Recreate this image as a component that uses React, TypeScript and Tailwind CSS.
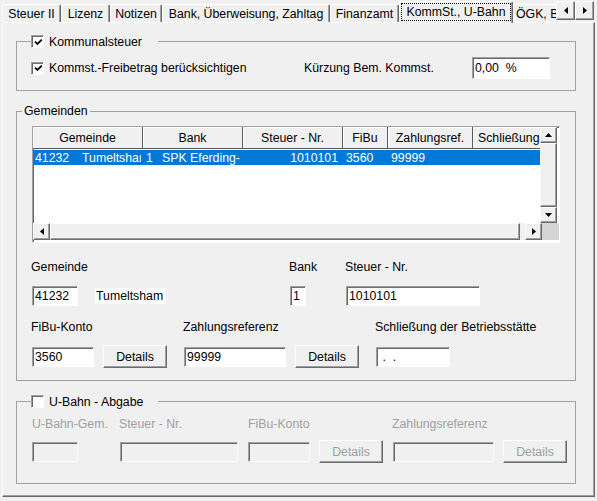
import React from "react";

const sunken =
  "border border-t-[#a0a0a0] border-l-[#a0a0a0] border-b-white border-r-white shadow-[inset_1px_1px_0_#696969]";
const raised =
  "border border-t-white border-l-white border-b-[#696969] border-r-[#696969] shadow-[inset_-1px_-1px_0_#a0a0a0]";

function Field({
  w,
  h = "h-[20px]",
  value = "",
  disabled = false,
  className = "",
}: {
  w: string;
  h?: string;
  value?: string;
  disabled?: boolean;
  className?: string;
}) {
  return (
    <div
      className={`${sunken} ${w} ${h} ${
        disabled ? "bg-[#f0f0f0]" : "bg-white"
      } shrink-0 flex items-center whitespace-pre overflow-hidden pl-[2px] ${className}`}
    >
      {value}
    </div>
  );
}

function Btn({ disabled = false, className = "" }: { disabled?: boolean; className?: string }) {
  return (
    <div
      className={`${raised} w-[64px] h-[23px] shrink-0 flex items-center justify-center ${
        disabled ? "text-[#a0a0a0]" : ""
      } ${className}`}
    >
      Details
    </div>
  );
}

function Check({ checked }: { checked?: boolean }) {
  return (
    <div className={`${sunken} w-[13px] h-[13px] bg-white shrink-0 flex items-center justify-center`}>
      {checked && (
        <svg width="9" height="9" viewBox="0 0 9 9" className="ml-[1px] mt-[1px]">
          <path d="M1 3.6 L3.4 6 L7.8 1.6" stroke="#000" strokeWidth="1.8" fill="none" />
        </svg>
      )}
    </div>
  );
}

function Arrow({ dir }: { dir: "up" | "down" | "left" | "right" }) {
  const pts = {
    up: "3.5,0 7,4 0,4",
    down: "0,0 7,0 3.5,4",
    left: "4,0 4,7 0,3.5",
    right: "0,0 0,7 4,3.5",
  }[dir];
  const vertical = dir === "up" || dir === "down";
  return (
    <svg width={vertical ? 7 : 4} height={vertical ? 4 : 7} viewBox={vertical ? "0 0 7 4" : "0 0 4 7"}>
      <polygon points={pts} fill="#000" />
    </svg>
  );
}

const tabs = [
  { label: "Steuer II", w: "w-[59px]" },
  { label: "Lizenz", w: "w-[49px]" },
  { label: "Notizen", w: "w-[52px]" },
  { label: "Bank, Überweisung, Zahltag", w: "w-[168px]" },
  { label: "Finanzamt", w: "w-[69px]" },
];

const cols = [
  { label: "Gemeinde", w: "w-[110px]" },
  { label: "Bank", w: "w-[100px]" },
  { label: "Steuer - Nr.", w: "w-[100px]" },
  { label: "FiBu", w: "w-[45px]" },
  { label: "Zahlungsref.", w: "w-[85px]" },
];

function ListView() {
  return (
    <div className={`${sunken} ml-[15px] mt-[8px] w-[528px] h-[117px] bg-white flex flex-col`}>
      <div className="flex h-[96px]">
        <div className="w-[507px] overflow-hidden">
          <div className="flex h-[22px] w-[600px]">
            {cols.map((c) => (
              <div
                key={c.label}
                className={`${c.w} shrink-0 bg-[#f0f0f0] border-r border-b border-[#5a5a5a] shadow-[inset_1px_1px_0_#fff] flex items-center justify-center whitespace-nowrap`}
              >
                {c.label}
              </div>
            ))}
            <div className="w-[100px] shrink-0 bg-[#f0f0f0] border-r border-b border-[#5a5a5a] shadow-[inset_1px_1px_0_#fff] flex items-center pl-[5px] whitespace-nowrap">
              Schließung der Betriebsstätte
            </div>
          </div>
          <div className="flex mt-[1px] h-[15px] w-[600px] bg-[#0078d7] text-white items-center whitespace-nowrap">
            <div className="w-[110px] shrink-0 pl-[2px] pr-[2px]">
              <div className="flex overflow-hidden">
                <span className="w-[47px] shrink-0">41232</span>
                <span>Tumeltsham</span>
              </div>
            </div>
            <div className="w-[100px] shrink-0 pl-[3px] overflow-hidden flex">
              <span className="w-[16px] shrink-0">1</span>
              <span>SPK Eferding-</span>
            </div>
            <div className="w-[100px] shrink-0 pr-[5px] text-right">1010101</div>
            <div className="w-[45px] shrink-0 pl-[3px]">3560</div>
            <div className="w-[85px] shrink-0 pl-[3px]">99999</div>
          </div>
        </div>
        <div className="w-[17px] flex flex-col bg-[#f0f0f0]">
          <div className={`${raised} h-[16px] flex items-center justify-center`}>
            <Arrow dir="up" />
          </div>
          <div className={`${raised} flex-1`} />
          <div className={`${raised} h-[16px] flex items-center justify-center`}>
            <Arrow dir="down" />
          </div>
        </div>
      </div>
      <div className="flex h-[17px] bg-[#f0f0f0]">
        <div className={`${raised} w-[17px] flex items-center justify-center`}>
          <Arrow dir="left" />
        </div>
        <div className={`${raised} w-[470px]`} />
        <div className="flex-1" />
        <div className={`${raised} w-[17px] flex items-center justify-center`}>
          <Arrow dir="right" />
        </div>
        <div className="w-[17px] bg-[#d4d4d4]" />
      </div>
    </div>
  );
}

export default function App() {
  return (
    <div className="w-[597px] h-[501px] bg-[#f0f0f0] text-[12.3px] leading-[14px] text-black font-['Liberation_Sans',Arial,sans-serif] overflow-hidden">
      {/* tab strip */}
      <div className="flex items-end h-[22px] pl-[2px]">
        {tabs.map((t) => (
          <div
            key={t.label}
            className={`${t.w} h-[18px] shrink-0 border border-b-0 border-t-white border-l-white border-r-[#696969] shadow-[inset_-1px_0_0_#a0a0a0] rounded-t-[2px] flex items-center justify-center whitespace-nowrap overflow-hidden`}
          >
            {t.label}
          </div>
        ))}
        <div className="relative z-10 w-[114px] h-[22px] -mb-[1px] shrink-0 bg-[#f0f0f0] border border-b-0 border-t-white border-l-white border-r-[#696969] shadow-[inset_-1px_0_0_#a0a0a0] rounded-t-[2px] flex flex-col items-center pt-[1px]">
          <div className="h-[18px] border border-dotted border-black px-[4px] leading-[16px] whitespace-nowrap">
            KommSt., U-Bahn
          </div>
        </div>
        <div className="w-[43px] h-[18px] shrink-0 border border-b-0 border-r-0 border-t-white border-l-white rounded-tl-[2px] pl-[2px] flex items-center whitespace-nowrap overflow-hidden">
          ÖGK, Beitragskonto
        </div>
        <div className="self-start mt-[1px] flex">
          <div className={`${raised} w-[19px] h-[19px] bg-[#f0f0f0] flex items-center justify-center`}>
            <Arrow dir="left" />
          </div>
          <div className={`${raised} w-[19px] h-[19px] bg-[#f0f0f0] flex items-center justify-center`}>
            <Arrow dir="right" />
          </div>
        </div>
      </div>

      {/* page */}
      <div className="ml-[2px] w-[593px] h-[475px] border border-t-white border-l-white border-r-[#696969] border-b-[#696969] shadow-[inset_-1px_-1px_0_#a0a0a0] flex flex-col">
        {/* Kommunalsteuer */}
        <fieldset className="mt-[12px] ml-[13px] w-[560px] border border-[#a0a0a0] pb-[11px]">
          <legend className="ml-[14px] w-[127px]">
            <div className="h-[13px] flex items-center gap-[5px]">
              <Check checked />
              <span>Kommunalsteuer</span>
            </div>
          </legend>
          <div className="mt-[9px] h-[22px] pl-[14px] flex items-center">
            <div className="w-[273px] flex items-center gap-[5px]">
              <Check checked />
              <span>Kommst.-Freibetrag berücksichtigen</span>
            </div>
            <span className="w-[168px]">Kürzung Bem. Kommst.</span>
            <Field w="w-[78px]" h="h-[22px]" value="0,00  %" />
          </div>
        </fieldset>

        {/* Gemeinden */}
        <fieldset className="mt-[13px] ml-[13px] w-[560px] border border-[#a0a0a0] pb-[12px]">
          <legend className="ml-[5px] px-[2px] h-[14px] leading-[14px]">Gemeinden</legend>
          <ListView />
          <div className="mt-[17px] h-[14px] pl-[14px] flex">
            <span className="w-[258px]">Gemeinde</span>
            <span className="w-[56px]">Bank</span>
            <span>Steuer - Nr.</span>
          </div>
          <div className="mt-[12px] h-[20px] pl-[14px] flex items-center">
            <Field w="w-[46px]" value="41232" className="ml-[1px]" />
            <div className="ml-[17px] w-[71px] h-[16px] bg-white pl-[1px] flex items-center">Tumeltsham</div>
            <Field w="w-[16px]" value="1" className="ml-[124px]" />
            <Field w="w-[134px]" value="1010101" className="ml-[40px]" />
          </div>
          <div className="mt-[14px] h-[14px] pl-[14px] flex">
            <span className="w-[152px]">FiBu-Konto</span>
            <span className="w-[192px]">Zahlungsreferenz</span>
            <span>Schließung der Betriebsstätte</span>
          </div>
          <div className="mt-[11px] h-[23px] pl-[14px] flex items-center">
            <Field w="w-[62px]" value="3560" className="ml-[1px]" />
            <Btn className="ml-[9px]" />
            <Field w="w-[102px]" value="99999" className="ml-[17px]" />
            <Btn className="ml-[9px]" />
            <Field w="w-[74px]" value=" .  ." className="ml-[17px]" />
          </div>
        </fieldset>

        {/* U-Bahn */}
        <fieldset className="mt-[14px] ml-[13px] w-[560px] border border-[#a0a0a0] pb-[20px]">
          <legend className="ml-[14px] w-[127px]">
            <div className="h-[13px] flex items-center gap-[5px]">
              <Check />
              <span>U-Bahn - Abgabe</span>
            </div>
          </legend>
          <div className="mt-[9px] h-[14px] pl-[15px] flex text-[#a0a0a0]">
            <span className="w-[87px]">U-Bahn-Gem.</span>
            <span className="w-[129px]">Steuer - Nr.</span>
            <span className="w-[144px]">FiBu-Konto</span>
            <span>Zahlungsreferenz</span>
          </div>
          <div className="mt-[9px] h-[23px] pl-[15px] flex items-center">
            <Field w="w-[46px]" disabled />
            <Field w="w-[118px]" disabled className="ml-[42px]" />
            <Field w="w-[62px]" disabled className="ml-[10px]" />
            <Btn disabled className="ml-[9px]" />
            <Field w="w-[101px]" disabled className="ml-[10px]" />
            <Btn disabled className="ml-[9px]" />
          </div>
        </fieldset>
      </div>
    </div>
  );
}
